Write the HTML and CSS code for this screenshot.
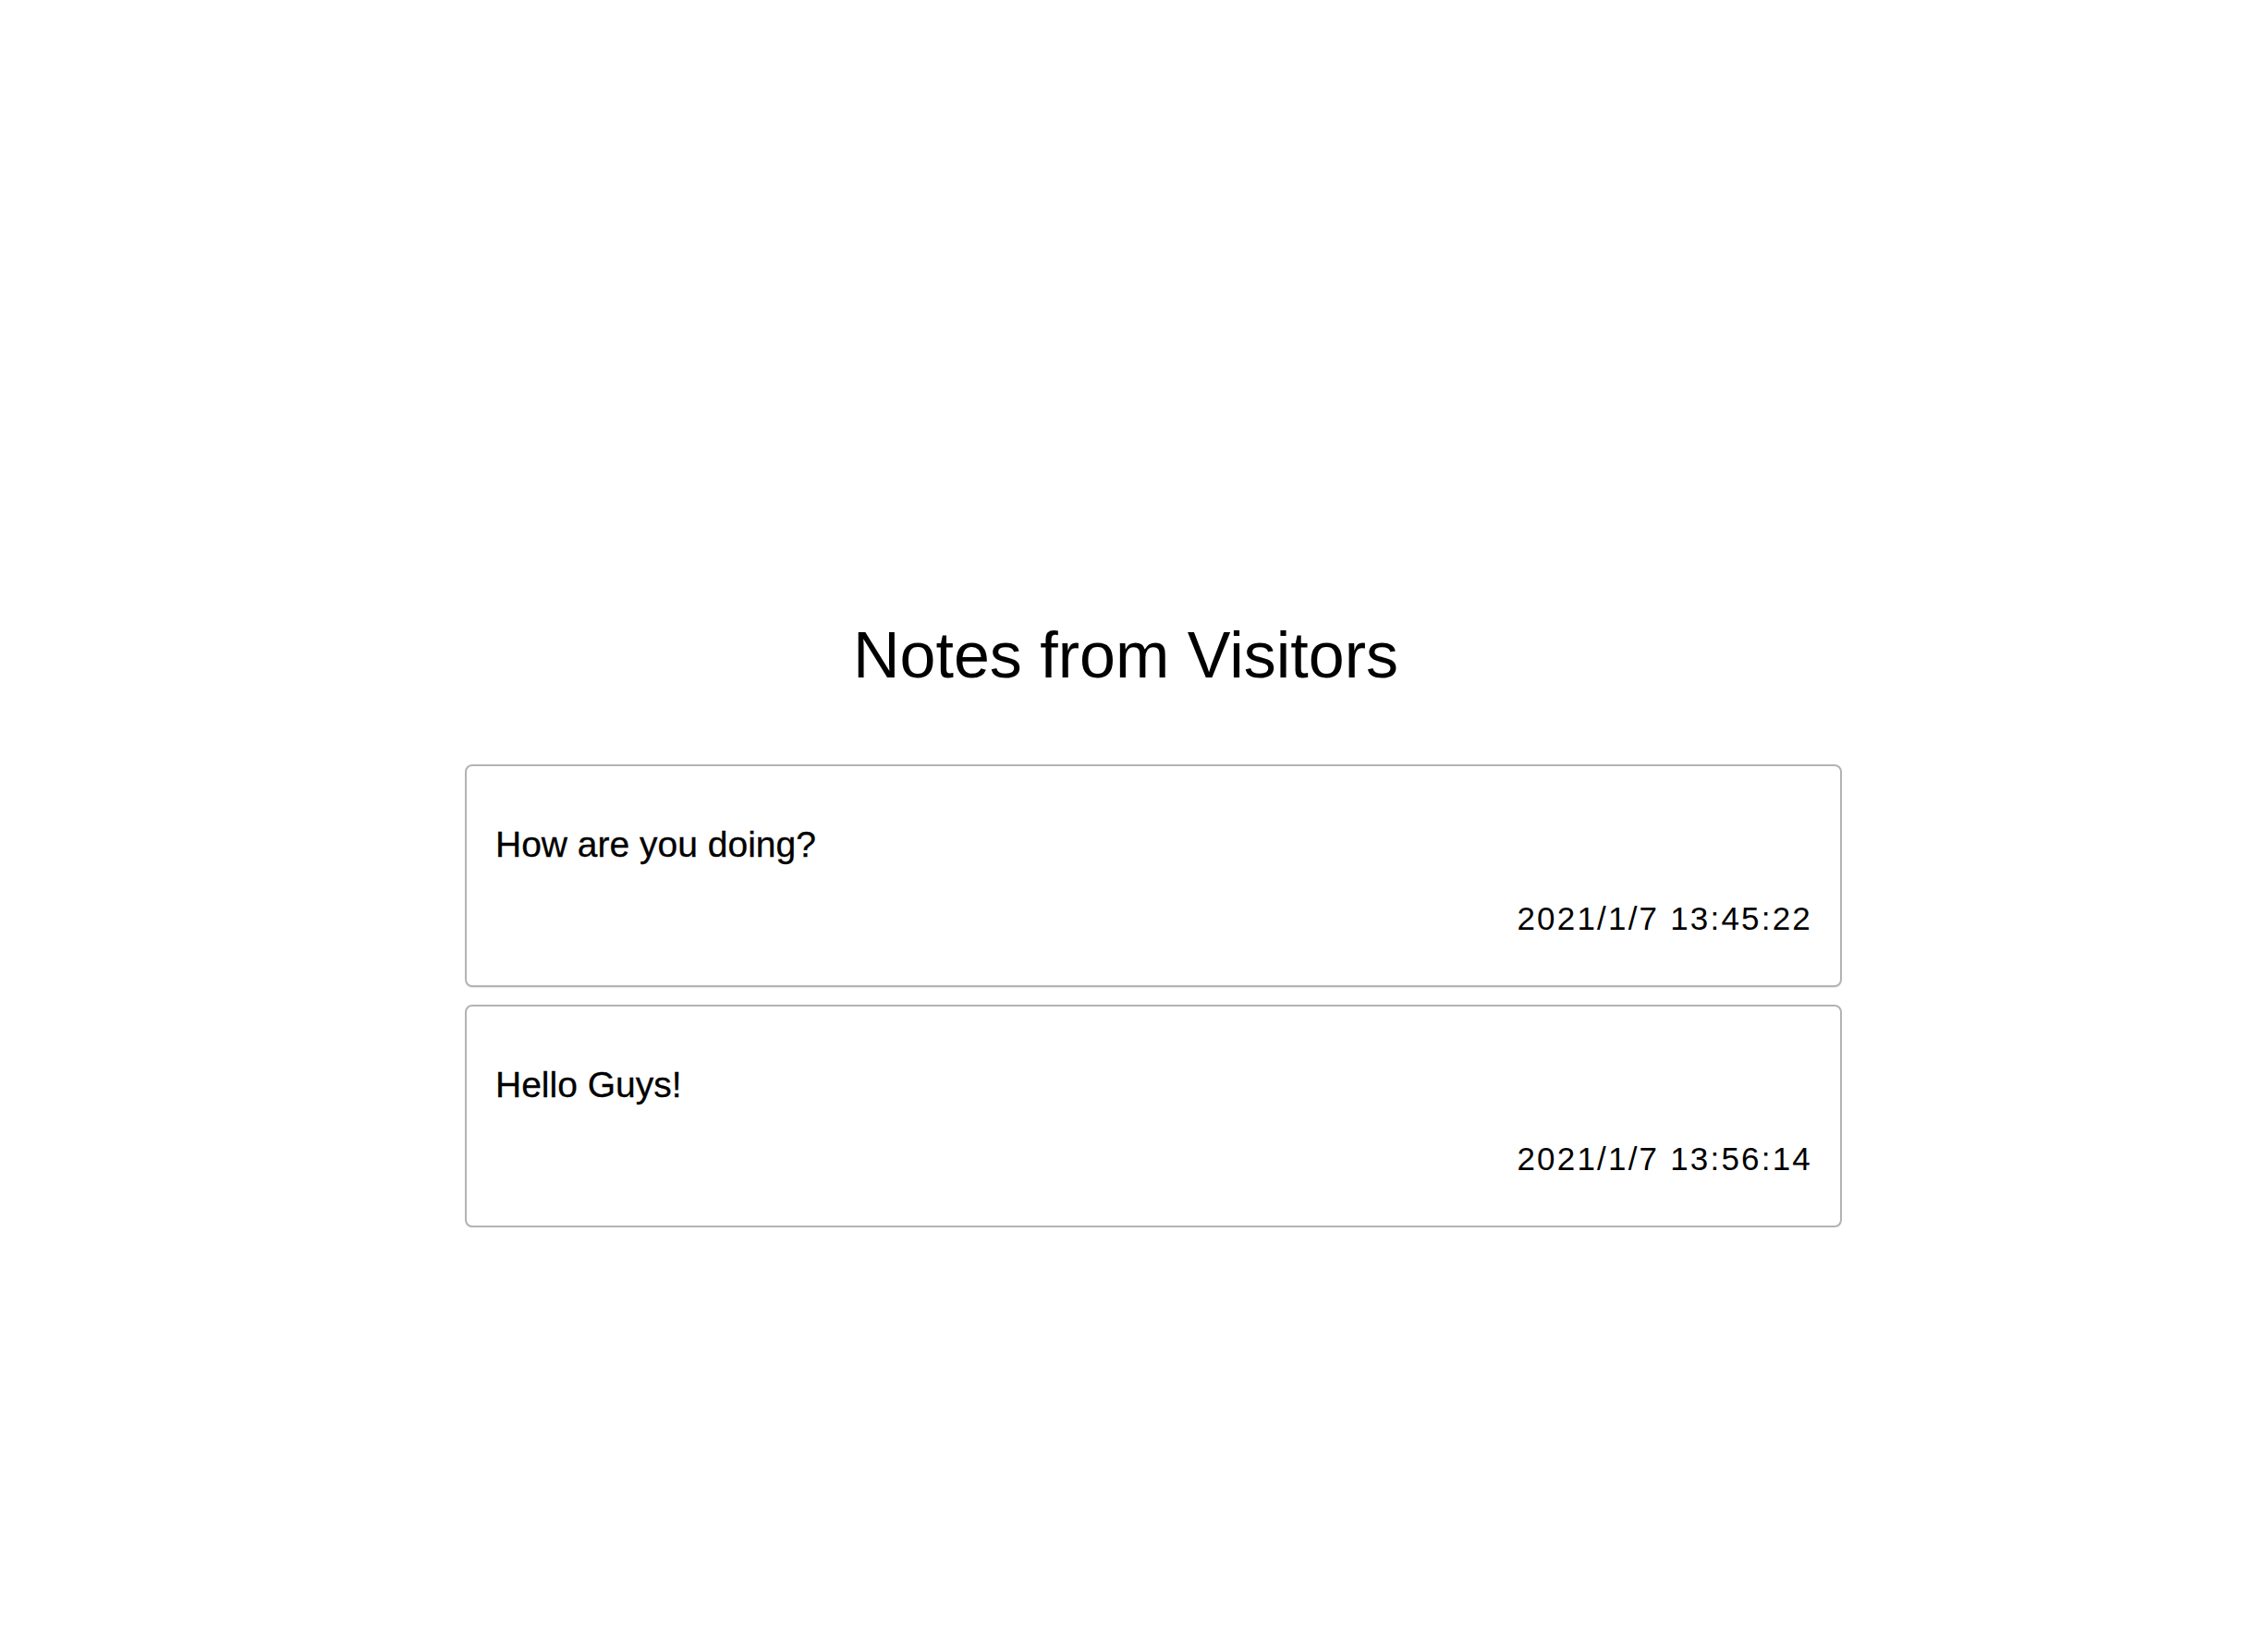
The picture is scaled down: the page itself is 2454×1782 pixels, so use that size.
FILE: index.html
```html
<!DOCTYPE html>
<html lang="en">
<head>
<meta charset="utf-8">
<title>Notes from Visitors</title>
<link rel="stylesheet" href="styles.css">
</head>
<body>
<main class="page">
  <h1 class="title">Notes from Visitors</h1>
  <ul class="notes">
    <li class="note">
      <p class="note-text">How are you doing?</p>
      <p class="note-date">2021/1/7 13:45:22</p>
    </li>
    <li class="note">
      <p class="note-text">Hello Guys!</p>
      <p class="note-date">2021/1/7 13:56:14</p>
    </li>
  </ul>
</main>
</body>
</html>
```

FILE: styles.css
```css
html, body {
  margin: 0;
  padding: 0;
  background: #ffffff;
  color: #000000;
  font-family: "Liberation Sans", Arial, sans-serif;
}

.page {
  width: 1490px;
  margin-left: 503px;
  padding-top: 674px;
}

.title {
  margin: 0 0 83px 0;
  padding-right: 60px;
  text-align: center;
  font-weight: 400;
  font-size: 70px;
  line-height: 70px;
}

.notes {
  list-style: none;
  margin: 0;
  padding: 0;
  display: flex;
  flex-direction: column;
  gap: 19px;
}

.note {
  border: 2px solid #b3b3b3;
  border-radius: 8px;
  padding: 62px 30px 52px 31px;
  box-shadow: 0 1px 1px rgba(0, 0, 0, 0.08);
}

.note-text {
  margin: 0 0 38px 0;
  font-size: 39px;
  line-height: 45px;
  -webkit-text-stroke: 0.3px #000;
}

.note-date {
  margin: 0;
  text-align: right;
  font-size: 35px;
  line-height: 40px;
  letter-spacing: 2.2px;
}
```
